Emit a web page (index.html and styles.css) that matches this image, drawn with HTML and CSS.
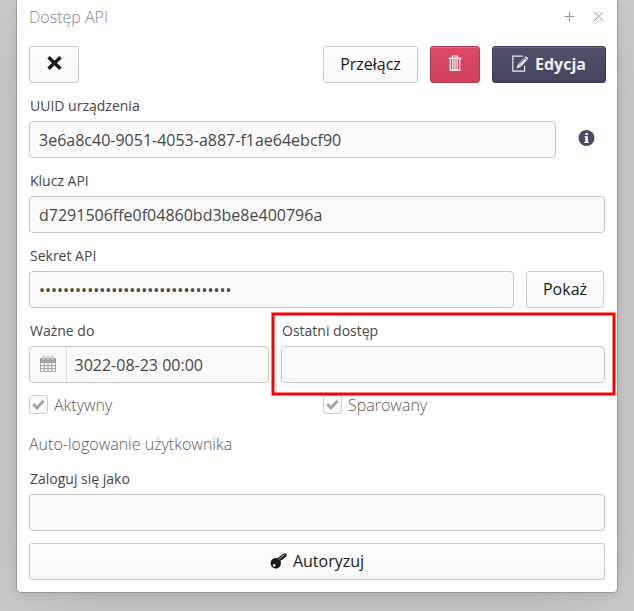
FILE: index.html
```html
<!DOCTYPE html>
<html lang="pl">
<head>
<meta charset="utf-8">
<title>Dostęp API</title>
<link rel="stylesheet" href="styles.css">
</head>
<body>
<main class="window">
  <header class="titlebar">
    <h1 class="title">Dostęp API</h1>
    <svg class="tool" width="11" height="11" viewBox="0 0 11 11"><path d="M5.500 .5v10M.5 5.500h10"/></svg>
    <svg class="tool" width="11" height="11" viewBox="0 0 11 11"><path d="M1 1l9 9M10 1l-9 9"/></svg>
  </header>

  <div class="toolbar">
    <div class="button close"><svg width="15" height="14" viewBox="0 0 15 14"><path d="M1.500 1.200l12 11.600M13.500 1.200l-12 11.600" fill="none" stroke="#191919" stroke-width="3.400"/></svg></div>
    <div class="button switch">Przełącz</div>
    <div class="button danger"><svg width="14" height="16" viewBox="0 0 14 16"><path d="M4.500 2.500V1h5v1.500" fill="none" stroke="#f7e7ea" stroke-width="1.200"/><path d="M.7 2.400h12.600v2.200H.7z" fill="#f7e7ea"/><path d="M2.300 5v10.200h9.400V5M4.800 5v9.500M7 5v9.500M9.200 5v9.500" fill="none" stroke="#f7e7ea" stroke-width="1.400"/></svg></div>
    <div class="button primary"><svg width="17" height="17" viewBox="0 0 17 17"><path d="M11 1.200H.8v15h11.800v-5.500" fill="none" stroke="#e8e8ec" stroke-width="1.200"/><path d="M13.900 1l2.500 2.500-7.700 8.600-4.200 1.500 1.500-4.300z" fill="#e8e8ec"/><path d="M7 9.200l1.700 1.700M7.500 8.900l5.700-6.200M12.600 2.500l2.400 2.400" fill="none" stroke="#494862" stroke-width=".8"/></svg><span>Edycja</span></div>
  </div>

  <section class="field">
    <div class="label">UUID urządzenia</div>
    <div class="row">
      <div class="input uuid">3e6a8c40-9051-4053-a887-f1ae64ebcf90</div>
      <svg class="info" width="17" height="16" viewBox="0 0 17 16"><circle cx="8.500" cy="8" r="8" fill="#494862"/><path d="M7.300 2.900h2.600v2H7.300zM6.500 6.200h3.400v5.500h1v1.200H6.300v-1.200h1V7.300h-.8z" fill="#fff"/></svg>
    </div>
  </section>
  <section class="field">
    <div class="label">Klucz API</div>
    <div class="input">d7291506ffe0f04860bd3be8e400796a</div>
  </section>
  <section class="field">
    <div class="label">Sekret API</div>
    <div class="row">
      <div class="input secret">••••••••••••••••••••••••••••••••</div>
      <div class="button show">Pokaż</div>
    </div>
  </section>
  <div class="row dates">
    <section class="field valid">
      <div class="label">Ważne do</div>
      <div class="input date">
        <span class="calendar"><svg width="16" height="17" viewBox="0 0 16 17"><path d="M.5 3.500h15v12.800H.5zM.5 7.500h15M.5 10.500h15M.5 13.500h15M4.300 7v9M8 7v9M11.700 7v9" fill="none" stroke="#a3a3a3"/><path d="M.5 3.500h15V7H.5z" fill="#a3a3a3"/><path d="M2.800 4.500V2.200a1 1 0 012 0v2.300M7 4.500V2.200a1 1 0 012 0v2.300M11.200 4.500V2.200a1 1 0 012 0v2.300" fill="#fafafa" stroke="#a3a3a3" stroke-width=".9"/></svg></span>
        <span>3022-08-23 00:00</span>
      </div>
    </section>
    <section class="field grow access">
      <div class="label">Ostatni dostęp</div>
      <div class="input"></div>
      <svg class="highlight" width="345" height="84" viewBox="0 0 345 84"><rect x="2" y="2" width="341" height="80" fill="none" stroke="#f00" stroke-width="3"/></svg>
    </section>
  </div>

  <div class="checks">
    <div class="check"><span class="box"><svg width="13" height="11" viewBox="0 0 13 11"><path d="M1.300 5l3.600 3.800L11.700 1.800" fill="none" stroke="#a4a3b1" stroke-width="2.900"/></svg></span>Aktywny</div>
    <div class="check"><span class="box"><svg width="13" height="11" viewBox="0 0 13 11"><path d="M1.300 5l3.600 3.800L11.700 1.800" fill="none" stroke="#a4a3b1" stroke-width="2.900"/></svg></span>Sparowany</div>
  </div>

  <h2 class="heading">Auto-logowanie użytkownika</h2>
  <section class="field login">
    <div class="label">Zaloguj się jako</div>
    <div class="input"></div>
  </section>
  <div class="button authorize"><svg width="17" height="17" viewBox="0 0 17 17"><path d="M16.500.5v3.200l-1.500.2-.3 1.300-1.500.2-.3 1.200-1.600.3-.8 1a5.300 5.300 0 11-3.200-2.700L13.800.5z" fill="#191919"/><path d="M8.500 6.500L14.800 1.500" stroke="#fff" stroke-width=".7"/><circle cx="4.200" cy="12.400" r="1.300" fill="#fff"/></svg><span>Autoryzuj</span></div>
</main>
</body>
</html>
```
FILE: styles.css
```css
* { box-sizing: border-box; }
body {
  margin: 0;
  height: 611px;
  overflow: hidden;
  background: #cacaca;
  font: 400 16px/24px "Open Sans", sans-serif;
  color: #474747;
}
.window {
  width: 600px;
  height: 592px;
  margin-left: 17px;
  padding: 0 12px;
  background: #fff;
  border-radius: 0 0 4px 4px;
  box-shadow: 0 2px 10px rgba(0,0,0,.1), 0 16px 80px -6px rgba(0,0,0,.1), 0 0 0 1px rgba(0,0,0,.16);
}
.titlebar {
  display: flex;
  height: 46px;
  padding: 5px 1px 0 0;
}
.title {
  flex: 1;
  margin: 0;
  font-size: 16px;
  font-weight: 300;
  color: #868686;
}
.tool {
  margin: 6px 0 0 18px;
  fill: none;
  stroke: #999;
}
.toolbar {
  display: flex;
  gap: 12px;
  margin-right: -1px;
  height: 49px;
}
.button {
  display: flex;
  align-items: center;
  justify-content: center;
  height: 37px;
  padding-bottom: 1px;
  border: 1px solid #c9c9c9;
  border-radius: 3px;
  background: linear-gradient(#fff, #f8f8f8);
  color: #191919;
}
.close { width: 50px; margin-right: auto; padding-bottom: 3px; }
.switch { width: 95px; }
.danger {
  width: 50px;
  padding-bottom: 4px;
  border-color: #b13850;
  background: linear-gradient(#dd4864, #d1425c);
  box-shadow: inset 0 1px #e4677e;
}
.primary {
  width: 114px;
  gap: 6px;
  border-color: #3b3a51;
  background: linear-gradient(#504f6b, #464560);
  box-shadow: inset 0 1px #69687f;
  color: #eeeef2;
  font-weight: 700;
}
.primary svg { margin-bottom: 2px; }
.field { height: 75px; }
.label {
  height: 26px;
  padding: 1px 0 0 1px;
  font-size: 14px;
  line-height: 20px;
}
.row { display: flex; }
.grow { flex: 1; }
.input {
  height: 37px;
  padding: 0 9px;
  border: 1px solid #c5c5c5;
  border-radius: 4px;
  background: #fafafa;
  line-height: 36px;
  white-space: nowrap;
}
.uuid { width: 527px; }
.info { margin: 9px 0 0 22px; }
.show { width: 78px; margin-left: 12px; }
.secret { width: 485px; }
.dates { gap: 12px; }
.valid { width: 240px; }
.date { display: flex; padding: 0; }
.calendar {
  display: flex;
  align-items: center;
  justify-content: center;
  width: 37px;
  margin-right: 7.500px;
  padding-bottom: 2px;
  border-right: 1px solid #e0e0e0;
}
.access { position: relative; }
.highlight {
  position: absolute;
  left: -10px;
  top: -8px;
}
.checks {
  display: grid;
  grid-template-columns: 294px 1fr;
  height: 35px;
}
.check {
  display: flex;
  align-items: flex-start;
  font-weight: 300;
  color: #5b5b5b;
  line-height: 20px;
}
.box {
  display: flex;
  align-items: center;
  justify-content: center;
  width: 19px;
  height: 19px;
  margin-right: 6px;
  border: 1px solid #cfcfcf;
  border-radius: 3px;
  background: linear-gradient(#fdfdfd, #f9f9f9);
}
.heading {
  height: 39px;
  margin: 0;
  padding-top: 2px;
  font-size: 16px;
  font-weight: 300;
  color: #5b5b5b;
}
.login { height: 74px; }
.login .label { height: 25px; padding-top: 0; }
.authorize { gap: 6px; }
```
